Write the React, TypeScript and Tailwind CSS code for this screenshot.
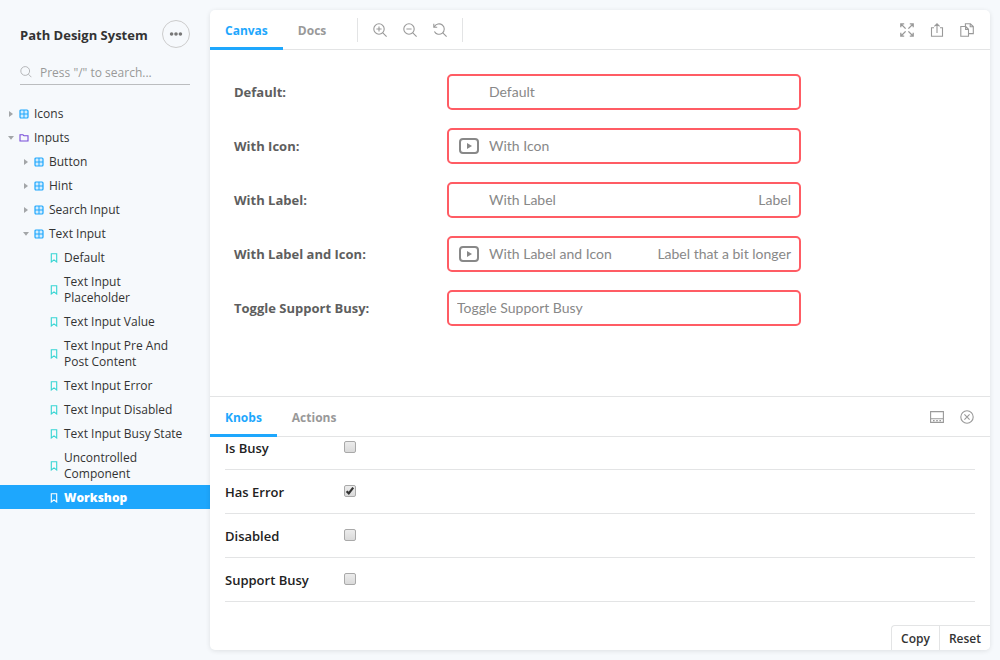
import React from 'react';

type Kind = 'component' | 'folder' | 'story';

interface TreeItem {
  label: string;
  kind: Kind;
  depth: 0 | 1 | 2;
  open?: boolean;
  selected?: boolean;
}

const tree: TreeItem[] = [
  { label: 'Icons', kind: 'component', depth: 0 },
  { label: 'Inputs', kind: 'folder', depth: 0, open: true },
  { label: 'Button', kind: 'component', depth: 1 },
  { label: 'Hint', kind: 'component', depth: 1 },
  { label: 'Search Input', kind: 'component', depth: 1 },
  { label: 'Text Input', kind: 'component', depth: 1, open: true },
  { label: 'Default', kind: 'story', depth: 2 },
  { label: 'Text Input Placeholder', kind: 'story', depth: 2 },
  { label: 'Text Input Value', kind: 'story', depth: 2 },
  { label: 'Text Input Pre And Post Content', kind: 'story', depth: 2 },
  { label: 'Text Input Error', kind: 'story', depth: 2 },
  { label: 'Text Input Disabled', kind: 'story', depth: 2 },
  { label: 'Text Input Busy State', kind: 'story', depth: 2 },
  { label: 'Uncontrolled Component', kind: 'story', depth: 2 },
  { label: 'Workshop', kind: 'story', depth: 2, selected: true },
];

const indent = { 0: 'pl-2', 1: 'pl-[23px]', 2: 'pl-[38px]' };

function KindIcon({ kind, selected }: { kind: Kind; selected?: boolean }) {
  if (kind === 'component') {
    return (
      <svg viewBox="0 0 10 10" className="size-2.5 shrink-0 text-[#1ea7fd]" fill="none" stroke="currentColor" aria-hidden="true">
        <rect x="1" y="1" width="8" height="8" rx="1" fill="#d3edfe" strokeWidth="1.2" />
        <path d="M5 1v8M1 5h8" strokeWidth="1" />
      </svg>
    );
  }
  if (kind === 'folder') {
    return (
      <svg viewBox="0 0 10 10" className="size-2.5 shrink-0 text-[#774cd8]" fill="none" stroke="currentColor" aria-hidden="true">
        <path d="M1 8V1.8h3l1 1h4V8z" strokeWidth="1.1" />
      </svg>
    );
  }
  return (
    <svg viewBox="0 0 10 10" className={`size-2.5 shrink-0 ${selected ? 'text-white' : 'text-[#37d5d3]'}`} fill="none" stroke="currentColor" aria-hidden="true">
      <path d="M2.3 0.8h5.4v8.2L5 6.9 2.3 9z" strokeWidth="1.1" />
    </svg>
  );
}

function TreeRow({ item }: { item: TreeItem }) {
  return (
    <li>
      <a
        href="#"
        aria-current={item.selected ? 'page' : undefined}
        className={`flex items-center pt-[5px] pr-6 pb-[3px] text-xs leading-4 ${indent[item.depth]} ${
          item.selected ? 'bg-[#1ea7fd] font-extrabold text-white' : 'text-[#333]'
        }`}
      >
        <span className="flex w-[11px] shrink-0 items-center">
          {item.kind !== 'story' && (
            <svg viewBox="0 0 6 6" className="size-1.5" fill="#a3a6a8" aria-hidden="true">
              <path d={item.open ? 'M0 1h6L3 4.8z' : 'M1 0l4 3-4 3z'} />
            </svg>
          )}
        </span>
        <KindIcon kind={item.kind} selected={item.selected} />
        <span className="ml-[5px]">{item.label}</span>
      </a>
    </li>
  );
}

function IconButton({ label, children }: { label: string; children: React.ReactNode }) {
  return (
    <button type="button" aria-label={label} className="flex size-[30px] items-center justify-center text-[#999]">
      <svg viewBox="0 0 14 14" className="size-3.5" fill="none" stroke="currentColor" strokeWidth="1.1" aria-hidden="true">
        {children}
      </svg>
    </button>
  );
}

function Tab({ label, active }: { label: string; active?: boolean }) {
  return (
    <button
      type="button"
      role="tab"
      aria-selected={!!active}
      className={`h-10 border-b-3 px-[15px] pt-1 text-xs leading-4 font-bold ${
        active ? 'border-[#1ea7fd] text-[#1ea7fd]' : 'border-transparent text-[#999]'
      }`}
    >
      {label}
    </button>
  );
}

interface Field {
  id: string;
  label: string;
  value: string;
  slot?: boolean;
  icon?: boolean;
  post?: string;
}

const fields: Field[] = [
  { id: 'default', label: 'Default:', value: 'Default', slot: true },
  { id: 'icon', label: 'With Icon:', value: 'With Icon', slot: true, icon: true },
  { id: 'label', label: 'With Label:', value: 'With Label', slot: true, post: 'Label' },
  { id: 'both', label: 'With Label and Icon:', value: 'With Label and Icon', slot: true, icon: true, post: 'Label that a bit longer' },
  { id: 'busy', label: 'Toggle Support Busy:', value: 'Toggle Support Busy' },
];

function FieldRow({ field }: { field: Field }) {
  return (
    <div className="grid grid-cols-[213px_minmax(0,354px)] items-center">
      <label htmlFor={field.id} className="font-['Open_Sans','Noto_Sans',sans-serif] text-[13px] leading-4 font-bold text-[#5e5e5e]">
        {field.label}
      </label>
      <div className="flex h-9 items-center rounded-[5px] border-2 border-[#ff5c64] px-2 text-sm text-[#888]">
        {field.slot && (
          <span className="w-8 shrink-0 pl-0.5">
            {field.icon && (
              <svg viewBox="0 0 20 16" className="h-4 w-5" aria-hidden="true">
                <rect x="1" y="1" width="18" height="14" rx="3" fill="none" stroke="#888" strokeWidth="2" />
                <path d="M8 5l5 3-5 3z" fill="#888" />
              </svg>
            )}
          </span>
        )}
        <input id={field.id} placeholder={field.value} className="min-w-0 flex-1 bg-transparent outline-none placeholder:text-[#888]" />
        {field.post && <span className="shrink-0">{field.post}</span>}
      </div>
    </div>
  );
}

function Knob({ id, label, checked }: { id: string; label: string; checked?: boolean }) {
  return (
    <div className="flex h-11 shrink-0 items-center border-b border-[#e3e4e5]">
      <label htmlFor={id} className="w-[119px] text-[13px] leading-4 font-semibold text-[#222]">
        {label}
      </label>
      <span className="relative mb-0.5 size-3">
        <input
          id={id}
          type="checkbox"
          defaultChecked={checked}
          className="peer block size-3 appearance-none rounded-xs border border-[#a9a9a9] bg-linear-to-b from-[#ececec] to-[#dadada]"
        />
        <svg viewBox="0 0 12 12" className="pointer-events-none absolute inset-0 hidden size-3 peer-checked:block" fill="none" stroke="#333" strokeWidth="2.2" aria-hidden="true">
          <path d="M2.6 6.2l2.2 2.2 4.4-5.8" />
        </svg>
      </span>
    </div>
  );
}

export default function App() {
  return (
    <div className="flex h-screen bg-[#f6f9fc] font-['Open_Sans','Noto_Sans',sans-serif]">
      <aside className="w-[210px] shrink-0 overflow-hidden pt-5">
        <div className="px-5">
          <div className="flex h-7 items-center justify-between">
            <a href="#" className="pt-0.5 text-[13px] leading-4 font-bold whitespace-nowrap text-[#333]">
              Path Design System
            </a>
            <button type="button" aria-label="Menu" className="flex size-7 shrink-0 items-center justify-center rounded-full border border-[#ccc]">
              <svg viewBox="0 0 14 4" className="h-1 w-3.5" fill="#777" aria-hidden="true">
                <circle cx="2.6" cy="2" r="1.8" />
                <circle cx="7" cy="2" r="1.8" />
                <circle cx="11.4" cy="2" r="1.8" />
              </svg>
            </button>
          </div>
          <div className="mt-3 flex h-[25px] items-center gap-2 border-b border-[#bbbdbf]">
            <svg viewBox="0 0 12 12" className="size-3 shrink-0" fill="none" stroke="#b5b7b9" aria-hidden="true">
              <circle cx="5.2" cy="5" r="4.4" />
              <path d="M8.4 8.2l3 3" />
            </svg>
            <input aria-label="Search" placeholder={'Press "/" to search...'} className="w-full min-w-0 bg-transparent pt-0.5 text-xs leading-4 outline-none placeholder:text-[#999]" />
          </div>
        </div>
        <nav className="mt-4">
          <ul>
            {tree.map((item) => (
              <TreeRow key={item.label + item.depth} item={item} />
            ))}
          </ul>
        </nav>
      </aside>

      <main className="my-2.5 mr-2.5 flex min-w-0 flex-1 flex-col overflow-hidden rounded-[5px] bg-white shadow-[0_1px_5px_0_rgba(0,0,0,0.1)]">
        <div className="flex h-10 shrink-0 items-start justify-between border-b border-[#e3e4e5]">
          <div className="flex items-center">
            <div role="tablist" className="flex">
              <Tab label="Canvas" active />
              <Tab label="Docs" />
            </div>
            <div className="ml-4 flex h-6 items-center border-x border-[#e3e4e5] px-[7px]">
              <IconButton label="Zoom in">
                <circle cx="6" cy="6" r="5.2" />
                <path d="M9.8 9.8l3.8 3.8M6 3.4v5.2M3.4 6h5.2" />
              </IconButton>
              <IconButton label="Zoom out">
                <circle cx="6" cy="6" r="5.2" />
                <path d="M9.8 9.8l3.8 3.8M3.4 6h5.2" />
              </IconButton>
              <IconButton label="Reset zoom">
                <path d="M1.4 3.8a5.2 5.2 0 1 1 0 4.6M9.8 9.8l3.8 3.8M0.8 0.8v3.4h3.4" />
              </IconButton>
            </div>
          </div>
          <div className="flex h-10 items-center pr-2">
            <IconButton label="Go full screen">
              <path d="M0.8 4.2V0.8H4.2M9.8 0.8h3.4v3.4M13.2 9.8v3.4H9.8M4.2 13.2H0.8V9.8M1 1l4.6 4.6M13 1L8.4 5.6M13 13L8.4 8.4M1 13l4.6-4.6" strokeWidth="1.3" />
            </IconButton>
            <IconButton label="Open canvas in new tab">
              <path d="M4 4.8H1.5v8.5h11V4.8H10M7 10V1M4.4 3.4L7 0.8l2.6 2.6" />
            </IconButton>
            <IconButton label="Copy canvas link">
              <path d="M0.8 3.5h5l2.7 2.7v7H0.8zM5.6 3.5v2.9h2.9M5.4 3.5V0.8h5L13.3 3.6v7H8.6M10.2 0.8v3h3" />
            </IconButton>
          </div>
        </div>

        <section className="min-h-0 flex-1 overflow-hidden px-6 pt-6 font-[Lato,sans-serif]">
          <div className="flex flex-col gap-[18px]">
            {fields.map((f) => (
              <FieldRow key={f.id} field={f} />
            ))}
          </div>
        </section>

        <section className="relative flex h-[254px] shrink-0 flex-col border-t border-[#e3e4e5]">
          <div className="flex h-10 shrink-0 items-start justify-between border-b border-[#e3e4e5]">
            <div role="tablist" className="flex">
              <Tab label="Knobs" active />
              <Tab label="Actions" />
            </div>
            <div className="flex h-10 items-center pr-2">
              <IconButton label="Change addons orientation">
                <path d="M0.6 1.6h12.8v10.8H0.6zM0.6 8.8h12.8M3 10.6h1.6M6.2 10.6h1.6M9.4 10.6H11" />
              </IconButton>
              <IconButton label="Hide addons">
                <circle cx="7" cy="7" r="6.2" />
                <path d="M4.4 4.4l5.2 5.2M9.6 4.4L4.4 9.6" />
              </IconButton>
            </div>
          </div>
          <div className="flex min-h-0 flex-1 flex-col justify-end overflow-hidden px-[15px] pb-12">
            <Knob id="k-busy" label="Is Busy" />
            <Knob id="k-error" label="Has Error" checked />
            <Knob id="k-disabled" label="Disabled" />
            <Knob id="k-support" label="Support Busy" />
          </div>
          <div className="absolute right-0 bottom-0 flex rounded-tl border-t border-l border-[#e3e4e5] bg-white text-xs leading-4 font-semibold text-[#333]">
            <button type="button" className="px-[9px] pt-[5px] pb-[3px]">
              Copy
            </button>
            <button type="button" className="border-l border-[#e3e4e5] px-[9px] pt-[5px] pb-[3px]">
              Reset
            </button>
          </div>
        </section>
      </main>
    </div>
  );
}
